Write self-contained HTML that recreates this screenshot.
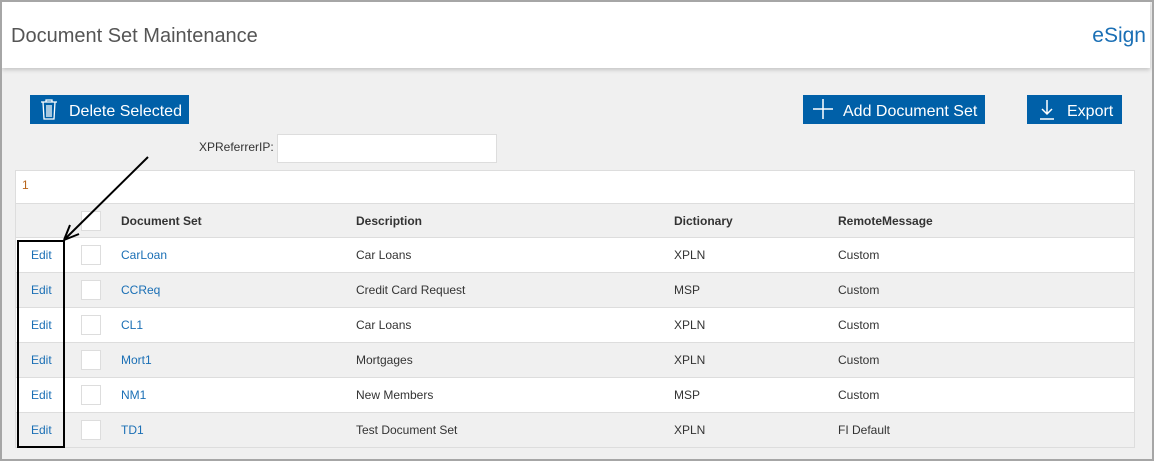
<!DOCTYPE html><html><head><style>
*{box-sizing:border-box;margin:0;padding:0}
body{width:1154px;height:461px;overflow:hidden;font-family:"Liberation Sans",sans-serif;background:#f0f0f0;position:relative}
.frame{position:absolute;inset:0;border:2px solid #a6a6a6;border-top-width:2px}
.hdr{position:absolute;left:2px;top:2px;width:1148px;height:66px;background:#fff;box-shadow:0 2px 4px rgba(0,0,0,.18)}
.hdr .t{position:absolute;left:9px;top:23px;font-size:20px;color:#555}
.hdr .e{position:absolute;right:4px;top:22px;font-size:21px;color:#1a6fb5}
.btn{position:absolute;top:95px;height:29px;background:#0060a8;color:#fff;font-size:16px;line-height:29px;white-space:nowrap}
.btn span{position:absolute;top:2px}
.lbl{position:absolute;left:199px;top:140px;font-size:12px;color:#333}
.inp{position:absolute;left:277px;top:134px;width:220px;height:29px;background:#fff;border:1px solid #ddd}
.tbl{position:absolute;left:15px;top:170px;width:1120px;height:278px;border:1px solid #ddd;background:#fff}
.row{position:absolute;left:0;width:1118px;height:35px;border-top:1px solid #ddd;font-size:12px;color:#333}
.row div{position:absolute;top:10px}
.g{background:#f0f0f0}
.cb{position:absolute;left:65px;top:7px;width:20px;height:20px;background:#fff;border:1px solid #ddd}
.a{color:#1a6fb5}
.h div{font-weight:bold}
</style></head><body>
<div class="hdr"><div class="t">Document Set Maintenance</div><div class="e">eSign</div></div>
<div class="btn" style="left:30px;width:159px"><svg style="position:absolute;left:10px;top:4px" width="18" height="21" viewBox="0 0 18 21" fill="none" stroke="#fff" stroke-width="1.3"><path d="M1 3h16M6 3V1h6v2M3 3l1 17h10l1-17M7 6v12M9 6v12M11 6v12"/></svg><span style="left:39px">Delete Selected</span></div>
<div class="btn" style="left:803px;width:182px"><svg style="position:absolute;left:10px;top:4px" width="20" height="20"><path d="M10 0v20M0 10h20" stroke="#fff" stroke-width="1.5"/></svg><span style="left:40px">Add Document Set</span></div>
<div class="btn" style="left:1027px;width:95px"><svg style="position:absolute;left:12px;top:5px" width="16" height="20" fill="none" stroke="#fff" stroke-width="1.5"><path d="M8 0v14M3 9l5 5 5-5M1 19h14"/></svg><span style="left:40px">Export</span></div>
<div class="lbl">XPReferrerIP:</div><div class="inp"></div>
<div class="tbl">
<div style="position:absolute;left:6px;top:7px;font-size:12px;color:#b8651b">1</div>
<div class="row g h" style="top:32px"><span class="cb"></span><div style="left:105px">Document Set</div><div style="left:340px">Description</div><div style="left:658px">Dictionary</div><div style="left:822px">RemoteMessage</div></div>
<div class="row" style="top:66px"><div class="a" style="left:15px">Edit</div><span class="cb"></span><div class="a" style="left:105px">CarLoan</div><div style="left:340px">Car Loans</div><div style="left:658px">XPLN</div><div style="left:822px">Custom</div></div>
<div class="row g" style="top:101px"><div class="a" style="left:15px">Edit</div><span class="cb"></span><div class="a" style="left:105px">CCReq</div><div style="left:340px">Credit Card Request</div><div style="left:658px">MSP</div><div style="left:822px">Custom</div></div>
<div class="row" style="top:136px"><div class="a" style="left:15px">Edit</div><span class="cb"></span><div class="a" style="left:105px">CL1</div><div style="left:340px">Car Loans</div><div style="left:658px">XPLN</div><div style="left:822px">Custom</div></div>
<div class="row g" style="top:171px"><div class="a" style="left:15px">Edit</div><span class="cb"></span><div class="a" style="left:105px">Mort1</div><div style="left:340px">Mortgages</div><div style="left:658px">XPLN</div><div style="left:822px">Custom</div></div>
<div class="row" style="top:206px"><div class="a" style="left:15px">Edit</div><span class="cb"></span><div class="a" style="left:105px">NM1</div><div style="left:340px">New Members</div><div style="left:658px">MSP</div><div style="left:822px">Custom</div></div>
<div class="row g" style="top:241px"><div class="a" style="left:15px">Edit</div><span class="cb"></span><div class="a" style="left:105px">TD1</div><div style="left:340px">Test Document Set</div><div style="left:658px">XPLN</div><div style="left:822px">FI Default</div></div>
</div>
<div style="position:absolute;left:17px;top:240px;width:48px;height:208px;border:2px solid #000"></div>
<svg style="position:absolute;left:0;top:0" width="1154" height="461"><path d="M148 157L66 238" stroke="#000" stroke-width="2"/><path d="M64 240l6-15M64 240l15-6" stroke="#000" stroke-width="2"/></svg>
<div class="frame"></div>
</body></html>
